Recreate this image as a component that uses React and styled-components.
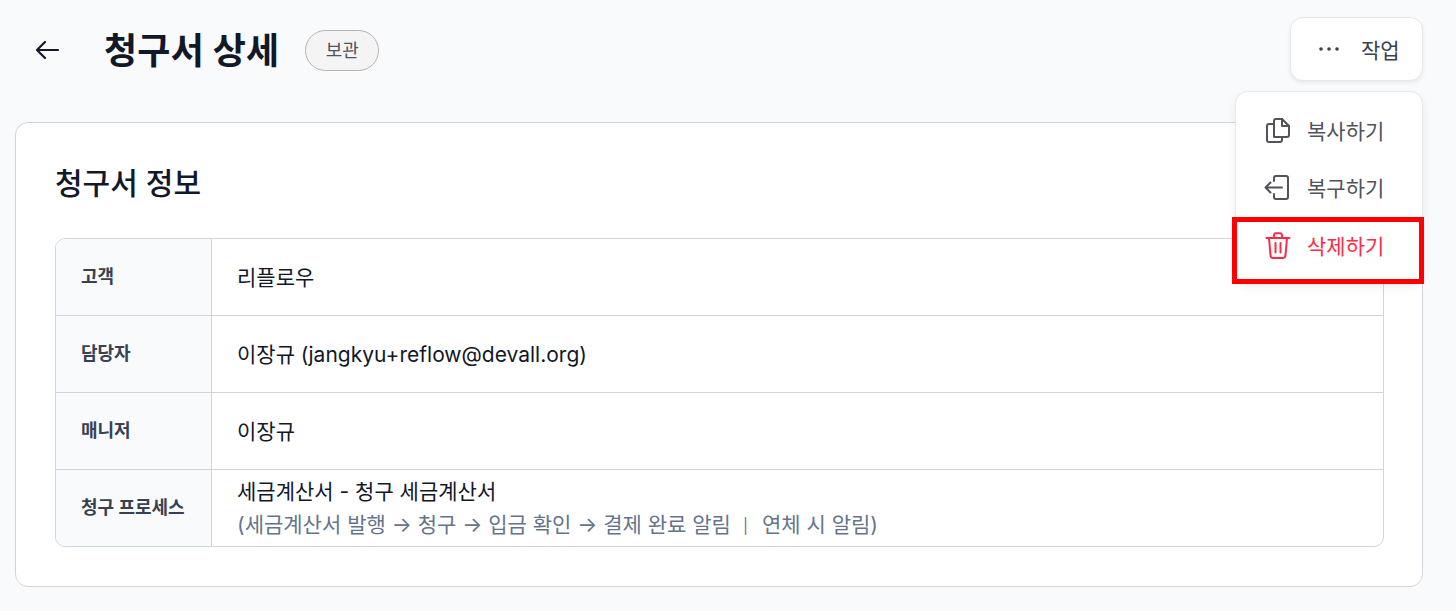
import React from "react";
import styled, { createGlobalStyle } from "styled-components";

const Global = createGlobalStyle`
  html, body { margin: 0; padding: 0; height: 100%; background: #f9fafb; }
  body { font-family: Inter, "Noto Sans CJK KR", "Noto Sans", sans-serif; overflow: hidden; }
`;
const Page = styled.div`
  position: relative;
  width: 1456px;
  height: 611px;
  padding: 0 33px 0 15px;
  box-sizing: border-box;
  background: #f9fafb;
`;
const Header = styled.header`
  display: flex;
  align-items: center;
  height: 100px;
  padding: 0 0 0 18px;
  margin-bottom: 22px;
`;
const BackButton = styled.button`
  display: flex;
  width: 30px;
  height: 30px;
  padding: 0;
  border: 0;
  background: none;
  color: #111827;
  margin-right: 42px;
  margin-left: -1px;
`;
const Title = styled.h1`
  margin: 0;
  padding-top: 1px;
  font-size: 36px;
  font-weight: 700;
  line-height: 44px;
  letter-spacing: 0.2px;
  color: #111827;
`;
const Badge = styled.span`
  margin-left: 26px;
  width: 74px;
  height: 41px;
  box-sizing: border-box;
  display: flex;
  align-items: center;
  justify-content: center;
  padding-bottom: 2px;
  border: 1px solid #b4b4b8;
  border-radius: 21px;
  background: #f4f4f5;
  color: #52525b;
  font-size: 18px;
`;
const ActionButton = styled.button`
  margin-left: auto;
  width: 133px;
  height: 64px;
  box-sizing: border-box;
  display: flex;
  align-items: center;
  padding: 0 0 0 26px;
  gap: 20px;
  border: 1px solid #e5e7eb;
  border-radius: 13px;
  background: #fff;
  box-shadow: 0 2px 4px rgba(0, 0, 0, 0.07);
  color: #374151;
  font-family: inherit;
  font-size: 21px;
  position: relative;
  top: -1px;
`;
const Menu = styled.div`
  position: absolute;
  left: 1235px;
  top: 91px;
  width: 188px;
  height: 192px;
  box-sizing: border-box;
  padding: 9px 0;
  border: 1px solid #e5e7eb;
  border-radius: 13px;
  background: #fff;
  box-shadow: 0 4px 10px rgba(0, 0, 0, 0.07);
`;
const MenuItem = styled.div`
  display: flex;
  align-items: center;
  height: 57.5px;
  padding-left: 28px;
  gap: 15px;
  font-size: 21px;
  color: ${(p) => (p.$danger ? "#fb2c48" : "#52525b")};
`;
const Highlight = styled.div`
  position: absolute;
  left: 1232px;
  top: 217px;
  width: 192px;
  height: 67px;
  box-sizing: border-box;
  border: 5px solid #ff0000;
`;
const Card = styled.section`
  height: 465px;
  box-sizing: border-box;
  padding: 38px 38px 39px 39px;
  background: #fff;
  border: 1px solid #d1d5db;
  border-radius: 13px;
`;
const CardTitle = styled.h2`
  margin: 0 0 33px;
  font-size: 30px;
  font-weight: 500;
  line-height: 44px;
  color: #111827;
`;
const Table = styled.div`
  border: 1px solid #d1d5db;
  border-radius: 10px;
  overflow: hidden;
`;
const Row = styled.div`
  display: flex;
  height: 77px;
  box-sizing: border-box;
  border-top: ${(p) => (p.$first ? "0" : "1px solid #d1d5db")};
  ${(p) => p.$first && "height: 76px;"}
`;
const Label = styled.div`
  width: 156px;
  flex: none;
  display: flex;
  align-items: center;
  padding: 0 0 4px 25px;
  box-sizing: border-box;
  background: #f9fafb;
  border-right: 1px solid #d1d5db;
  font-size: 18px;
  font-weight: 700;
  color: #374151;
`;
const Value = styled.div`
  flex: 1;
  display: flex;
  flex-direction: column;
  justify-content: center;
  padding-left: 25px;
  font-size: 21px;
  line-height: 33px;
  color: #111827;
`;
const Note = styled.span`
  color: #64748b;
  font-size: 21px;
`;
const Pipe = styled.span`
  font-size: 15px;
  margin: 0 14px 0 12px;
  vertical-align: 1px;
`;

const Icon = styled.svg`
  flex: none;
  fill: none;
  stroke: currentColor;
  stroke-linecap: round;
  stroke-linejoin: round;
`;

const rows = [
  ["고객", "리플로우"],
  ["담당자", "이장규 (jangkyu+reflow@devall.org)"],
  ["매니저", "이장규"],
];

export default function App() {
  return (
    <Page>
      <Global />
      <Header>
        <BackButton aria-label="back">
          <Icon width="30" height="30" viewBox="0 0 30 30" strokeWidth="2.2">
            <path d="M26 15H5M13 7l-8 8 8 8" />
          </Icon>
        </BackButton>
        <Title>청구서 상세</Title>
        <Badge>보관</Badge>
        <ActionButton>
          <Icon width="24" height="24" viewBox="0 0 24 24" strokeWidth="3.6">
            <path d="M4 12h.01M12 12h.01M20 12h.01" />
          </Icon>
          작업
        </ActionButton>
      </Header>
      <Card>
        <CardTitle>청구서 정보</CardTitle>
        <Table>
          {rows.map(([k, v], i) => (
            <Row key={k} $first={i === 0}>
              <Label>{k}</Label>
              <Value>{v}</Value>
            </Row>
          ))}
          <Row>
            <Label>청구 프로세스</Label>
            <Value>
              <span>세금계산서 - 청구 세금계산서</span>
              <Note>(세금계산서 발행 → 청구 → 입금 확인 → 결제 완료 알림<Pipe>|</Pipe>연체 시 알림)</Note>
            </Value>
          </Row>
        </Table>
      </Card>
      <Menu>
        <MenuItem>
          <Icon width="28" height="28" viewBox="0 0 28 28" strokeWidth="2">
            <path d="M10 21V5a2 2 0 0 1 2-2h6l7 7v9a2 2 0 0 1-2 2H10Z" />
            <path d="M18 3v7h7" />
            <path d="M10 8H5a2 2 0 0 0-2 2v14a2 2 0 0 0 2 2h11a2 2 0 0 0 2-2v-3" />
          </Icon>
          복사하기
        </MenuItem>
        <MenuItem>
          <Icon width="28" height="28" viewBox="0 0 28 28" strokeWidth="2">
            <path d="M10 8V5a2 2 0 0 1 2-2h10a2 2 0 0 1 2 2v19a2 2 0 0 1-2 2H12a2 2 0 0 1-2-2v-3" />
            <path d="M18 14.500H1.500M6.500 9.500l-5 5 5 5" />
          </Icon>
          복구하기
        </MenuItem>
        <MenuItem $danger>
          <Icon width="28" height="28" viewBox="0 0 28 28" strokeWidth="2">
            <path d="M2.500 7h23M9.500 7l.7-3.500a1.500 1.500 0 0 1 1.500-1.200h4.600a1.500 1.500 0 0 1 1.500 1.200l.7 3.500" />
            <path d="M5 7l1.600 18a2.500 2.500 0 0 0 2.500 2h9.800a2.500 2.500 0 0 0 2.500-2L23 7" />
            <path d="M11.500 12v9.500M16.500 12v9.500" />
          </Icon>
          삭제하기
        </MenuItem>
      </Menu>
      <Highlight />
    </Page>
  );
}
